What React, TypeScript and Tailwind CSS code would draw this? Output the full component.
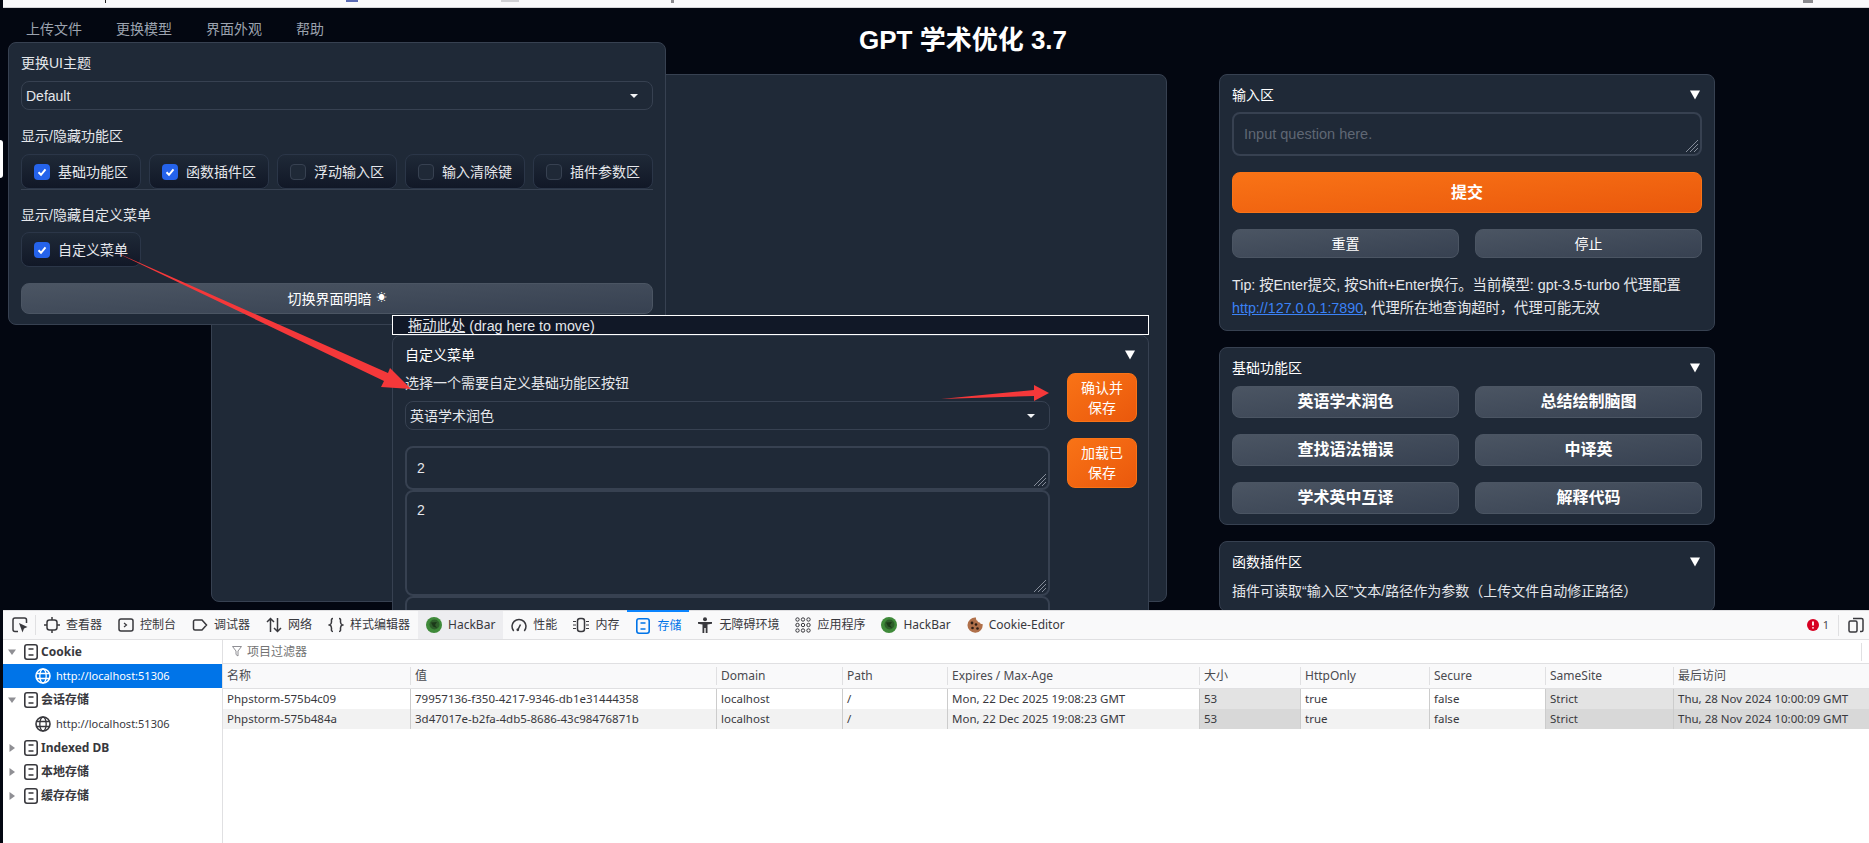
import type { ReactNode } from "react";

/* ----------------------------------
   SMALL DRAWINGS
---------------------------------- */

function PanelArrow() {
  return (
    <svg width="10" height="10" viewBox="0 0 10 10" className="shrink-0">
      <polygon points="0,0.5 10,0.5 5,9.5" fill="#fff" />
    </svg>
  );
}

function Caret() {
  return (
    <svg width="8" height="4" viewBox="0 0 8 4" className="shrink-0">
      <polygon points="0,0 8,0 4,4" fill="#f3f4f6" />
    </svg>
  );
}

function Tick() {
  return (
    <svg width="16" height="16" viewBox="0 0 16 16" className="shrink-0 rounded-[4px] bg-[#2563eb]">
      <path d="M4.5 8.3 7 10.8 11.5 5.4" fill="none" stroke="#fff" strokeWidth="2" />
    </svg>
  );
}

function Hatch() {
  return (
    <svg width="14" height="14" viewBox="0 0 14 14" className="pointer-events-none absolute right-[1px] bottom-[1px]">
      <path d="M1 13 13 1M5 13l8-8M9 13l4-4" stroke="#858c99" strokeWidth="1" />
    </svg>
  );
}

function StorageIcon({ size = 16 }: { size?: number }) {
  return (
    <svg width={size} height={size} viewBox="0 0 16 16" fill="none" stroke="currentColor" strokeWidth="1.6" className="shrink-0">
      <rect x="1.8" y="0.8" width="12.4" height="14.4" rx="2.2" />
      <path d="M5.500 5h5M5.500 11h5" />
    </svg>
  );
}

function GlobeIcon({ light }: { light?: boolean }) {
  return (
    <svg width="16" height="16" viewBox="0 0 16 16" fill="none" stroke={light ? "#fff" : "#38383d"} strokeWidth="1.3" className="shrink-0">
      <circle cx="8" cy="8" r="7" strokeWidth="1.6" />
      <ellipse cx="8" cy="8" rx="3.2" ry="7" />
      <path d="M1.500 5.500h13M1.500 10.500h13" />
    </svg>
  );
}

function TreeArrow({ open }: { open?: boolean }) {
  return (
    <svg width="8" height="8" viewBox="0 0 8 8" className="shrink-0">
      <polygon points={open ? "0,1.500 8,1.500 4,7" : "1.500,0 7,4 1.500,8"} fill="#8f8f94" />
    </svg>
  );
}

function HackBarIcon() {
  return (
    <svg width="16" height="16" viewBox="0 0 16 16" className="shrink-0">
      <circle cx="8" cy="8" r="8" fill="#3f8a3a" />
      <circle cx="8.500" cy="7.500" r="5" fill="#2e5f2b" />
      <path d="M5 5.500 11 5 9 8l2 3-4-1.500z" fill="#1c3a1a" />
    </svg>
  );
}

function CookieIcon() {
  return (
    <svg width="16" height="16" viewBox="0 0 16 16" className="shrink-0">
      <path d="M9 .6A7.600 7.600 0 1 0 15.600 7c-1.300.3-2.400-.4-2.700-1.600-1.300.2-2.400-.5-2.600-1.800C9.400 3.300 8.800 2 9 .6z" fill="#b0704a" />
      <circle cx="5" cy="6" r="1.400" fill="#2d1d14" />
      <circle cx="9" cy="7.500" r="1.300" fill="#2d1d14" />
      <circle cx="5.500" cy="11" r="1.300" fill="#2d1d14" />
      <circle cx="10.500" cy="11.500" r="1.300" fill="#2d1d14" />
    </svg>
  );
}

const stroke = { fill: "none", stroke: "currentColor", strokeWidth: 1.5 };

const ICON_PATHS: Record<string, ReactNode> = {
  inspector: (
    <svg width="16" height="16" viewBox="0 0 16 16" {...stroke} className="shrink-0">
      <path d="M6 14.500H3a2 2 0 0 1-2-2V3a2 2 0 0 1 2-2h9.500a2 2 0 0 1 2 2v3" />
      <polygon points="7,6 15.500,10 12,11.500 10.500,15.500" fill="currentColor" stroke="none" />
    </svg>
  ),
  console: (
    <svg width="16" height="16" viewBox="0 0 16 16" {...stroke} className="shrink-0">
      <rect x="1" y="2" width="14" height="12" rx="2" />
      <path d="m6 6 2.500 2L6 10" strokeWidth="1.200" />
    </svg>
  ),
  viewer: (
    <svg width="16" height="16" viewBox="0 0 16 16" {...stroke} className="shrink-0">
      <rect x="3" y="3" width="10" height="10" rx="2.500" />
      <path d="M8 0v3M8 13v3M0 8h3M13 8h3" />
    </svg>
  ),
  debugger: (
    <svg width="16" height="16" viewBox="0 0 16 16" {...stroke} className="shrink-0">
      <path d="M3 3h7l4.500 5-4.500 5H3a1.500 1.500 0 0 1-1.500-1.500v-7A1.500 1.500 0 0 1 3 3z" />
    </svg>
  ),
  network: (
    <svg width="16" height="16" viewBox="0 0 16 16" {...stroke} className="shrink-0">
      <path d="M4.500 15V1.500M1 5l3.500-3.500L8 5M11.500 1v13.500M8 11l3.500 3.500L15 11" />
    </svg>
  ),
  style: (
    <svg width="16" height="16" viewBox="0 0 16 16" {...stroke} className="shrink-0">
      <path d="M5 1.500C3 1.500 3.500 3 3.500 5S3 7.500 1.500 8C3 8.500 3.500 9 3.500 11s-.5 3.500 1.500 3.500M11 1.500c2 0 1.500 1.500 1.500 3.500s.5 2.500 2 3c-1.500.5-2 1-2 3s.5 3.500-1.500 3.500" />
    </svg>
  ),
  performance: (
    <svg width="16" height="16" viewBox="0 0 16 16" {...stroke} className="shrink-0">
      <path d="M2.700 14A7 7 0 1 1 13.300 14" />
      <path d="m7 12.500 2.500-5" />
      <circle cx="6.800" cy="12.800" r="1.400" fill="currentColor" stroke="none" />
    </svg>
  ),
  memory: (
    <svg width="16" height="16" viewBox="0 0 16 16" {...stroke} className="shrink-0">
      <rect x="4.500" y="1.500" width="7" height="13" rx="2.500" />
      <path d="M0 4.500h3M0 8h3M0 11.500h3M13 4.500h3M13 8h3M13 11.500h3" strokeWidth="1" />
    </svg>
  ),
  accessibility: (
    <svg width="16" height="16" viewBox="0 0 16 16" className="shrink-0" fill="currentColor">
      <circle cx="8" cy="2.200" r="2" />
      <path d="M1 5h14v1.800l-4.500.7V16H8.700v-5H7.300v5H5.500V7.500L1 6.800z" />
    </svg>
  ),
  apps: (
    <svg width="16" height="16" viewBox="0 0 16 16" fill="none" stroke="currentColor" strokeWidth="1" className="shrink-0">
      {[2.500, 8, 13.500].flatMap((x) =>
        [2.500, 8, 13.500].map((y) => <circle key={`${x}-${y}`} cx={x} cy={y} r="1.700" />)
      )}
    </svg>
  ),
  responsive: (
    <svg width="16" height="16" viewBox="0 0 16 16" {...stroke} className="shrink-0">
      <rect x="1" y="4" width="8" height="11" rx="1.500" />
      <path d="M5 1.500h8.500a1.500 1.500 0 0 1 1.500 1.500v10a1.500 1.500 0 0 1-1.500 1.500H12" />
    </svg>
  ),
};

/* ----------------------------------
   GRADIO PARTS
---------------------------------- */

const cjk = "[font-family:'Liberation_Sans','Noto_Sans_CJK_SC',sans-serif]";

function Chip({ label, checked }: { label: string; checked?: boolean }) {
  return (
    <div className="flex h-[35px] w-[120px] items-center gap-[8px] rounded-lg border border-[#2b3648] bg-linear-to-b from-[#1f2937] to-[#111827] pl-[12px] text-sm text-[#e5e7eb]">
      {checked ? <Tick /> : <span className="h-[16px] w-[16px] shrink-0 rounded-[4px] border border-[#374151] bg-[#1f2937]" />}
      {label}
    </div>
  );
}

function Select({ value, className }: { value: string; className: string }) {
  return (
    <div className={`flex h-[29px] items-center justify-between rounded-lg border border-[#374151] bg-[#1f2937] pr-[14px] pl-[4px] text-sm text-[#e5e7eb] ${className}`}>
      {value}
      <Caret />
    </div>
  );
}

function GrayButton({ label, bold, className = "" }: { label: ReactNode; bold?: boolean; className?: string }) {
  return (
    <div className={`flex items-center justify-center rounded-lg border border-[#4b5563] bg-linear-to-br from-[#4b5563] to-[#374151] text-white ${bold ? "h-[32px] text-base font-bold" : "h-[29px] text-sm"} ${className}`}>
      {label}
    </div>
  );
}

function OrangeButton({ children, className }: { children: ReactNode; className: string }) {
  return (
    <div className={`flex items-center justify-center rounded-lg border border-[#f97316] bg-linear-to-br from-[#f97316] to-[#ea580c] text-center text-white ${className}`}>
      {children}
    </div>
  );
}

function Box({ value, placeholder, className, roomy }: { value?: string; placeholder?: string; className: string; roomy?: boolean }) {
  return (
    <div className={`relative shrink-0 rounded-lg border-2 border-[#374151] bg-[#1f2937] ${className}`}>
      <textarea
        readOnly
        value={value ?? ""}
        placeholder={placeholder}
        className={`h-full w-full resize-none bg-transparent px-[10px] text-sm text-[#e5e7eb] outline-none placeholder:text-[14.5px] placeholder:text-[#5f6774] ${roomy ? "pt-[8px]" : "pt-[10px]"} ${cjk}`}
      />
      <Hatch />
    </div>
  );
}

function SideBlock({ title, children }: { title: string; children: ReactNode }) {
  return (
    <section className="rounded-lg border border-[#374151] bg-[#1f2937] px-[12px] pt-[10px] pb-[10px]">
      <div className="flex h-[20px] items-center justify-between pr-[2px] text-sm text-white">
        {title}
        <PanelArrow />
      </div>
      {children}
    </section>
  );
}

/* ----------------------------------
   APPEARANCE POPOVER
---------------------------------- */

function ThemeMenu() {
  return (
    <div className="absolute top-[34px] left-[5px] z-10 h-[283px] w-[658px] rounded-lg border border-[#374151] bg-[#1f2937] px-[12px] pt-[10px] text-sm text-[#e5e7eb]">
      <div className="h-[20px] leading-[20px]">更换UI主题</div>
      <Select value="Default" className="mt-[8px] pl-[4px]" />
      <div className="mt-[16px] h-[20px] leading-[20px]">显示/隐藏功能区</div>
      <div className="mt-[8px] flex justify-between border-b border-[#374151]">
        <Chip label="基础功能区" checked />
        <Chip label="函数插件区" checked />
        <Chip label="浮动输入区" />
        <Chip label="输入清除键" />
        <Chip label="插件参数区" />
      </div>
      <div className="mt-[15px] h-[20px] leading-[20px]">显示/隐藏自定义菜单</div>
      <div className="mt-[7px]">
        <Chip label="自定义菜单" checked />
      </div>
      <GrayButton
        label={
          <>
            切换界面明暗<span className="ml-[5px] text-[10px]">☀</span>
          </>
        }
        className="mt-[16px] !h-[31px]"
      />
    </div>
  );
}

/* ----------------------------------
   FLOATING MENU
---------------------------------- */

function FloatingMenu() {
  return (
    <div className="absolute top-[307px] left-[389px] z-20 w-[757px]">
      <div className="h-[20px] border border-white bg-[#111827] pl-[15px] text-[14.3px] leading-[20px] text-[#e5e7eb]">
        <span className="underline">拖动此处</span> (drag here to move)
      </div>
      <div className="h-[320px] rounded-t-lg border border-[#374151] bg-[#1f2937] pr-[11px] pl-[12px] text-sm text-[#e5e7eb]">
        <div className="flex h-[37px] items-center justify-between pr-[2px] text-white">
          自定义菜单
          <PanelArrow />
        </div>
        <div className="flex gap-[17px]">
          <div className="flex w-[645px] flex-col">
            <div className="h-[20px] leading-[20px]">选择一个需要自定义基础功能区按钮</div>
            <Select value="英语学术润色" className="mt-[8px]" />
            <Box value="2" className="mt-[16px] h-[44px]" />
            <Box value="2" className="h-[106px]" roomy />
            <Box className="h-[100px]" />
          </div>
          <div className="flex w-[70px] flex-col gap-[16px]">
            <OrangeButton className="h-[49px] text-[14px] leading-[20px]">确认并<br />保存</OrangeButton>
            <OrangeButton className="h-[50px] text-[14px] leading-[20px]">加载已<br />保存</OrangeButton>
          </div>
        </div>
      </div>
    </div>
  );
}

/* ----------------------------------
   DEVTOOLS
---------------------------------- */

type Tool = { label: string; icon: ReactNode; active?: boolean; hover?: boolean };

const TOOLS: Tool[] = [
  { label: "查看器", icon: ICON_PATHS.viewer },
  { label: "控制台", icon: ICON_PATHS.console },
  { label: "调试器", icon: ICON_PATHS.debugger },
  { label: "网络", icon: ICON_PATHS.network },
  { label: "样式编辑器", icon: ICON_PATHS.style },
  { label: "HackBar", icon: <HackBarIcon />, hover: true },
  { label: "性能", icon: ICON_PATHS.performance },
  { label: "内存", icon: ICON_PATHS.memory },
  { label: "存储", icon: <StorageIcon />, active: true },
  { label: "无障碍环境", icon: ICON_PATHS.accessibility },
  { label: "应用程序", icon: ICON_PATHS.apps },
  { label: "HackBar", icon: <HackBarIcon /> },
  { label: "Cookie-Editor", icon: <CookieIcon /> },
];

const TREE = [
  { label: "Cookie", arrow: "open" },
  { label: "http://localhost:51306", selected: true },
  { label: "会话存储", arrow: "open" },
  { label: "http://localhost:51306" },
  { label: "Indexed DB", arrow: "closed" },
  { label: "本地存储", arrow: "closed" },
  { label: "缓存存储", arrow: "closed" },
];

const COLUMNS = ["名称", "值", "Domain", "Path", "Expires / Max-Age", "大小", "HttpOnly", "Secure", "SameSite", "最后访问"];

const ROWS = [
  ["Phpstorm-575b4c09", "79957136-f350-4217-9346-db1e31444358", "localhost", "/", "Mon, 22 Dec 2025 19:08:23 GMT", "53", "true", "false", "Strict", "Thu, 28 Nov 2024 10:00:09 GMT"],
  ["Phpstorm-575b484a", "3d47017e-b2fa-4db5-8686-43c98476871b", "localhost", "/", "Mon, 22 Dec 2025 19:08:23 GMT", "53", "true", "false", "Strict", "Thu, 28 Nov 2024 10:00:09 GMT"],
];

const SHADED = [5, 8, 9];
const gridCols = "grid-cols-[187px_306px_126px_105px_252px_101px_129px_116px_128px_1fr]";

function DevTools() {
  return (
    <div className="flex h-[233px] flex-col bg-white text-[12px] text-[#38383d] [font-family:'Noto_Sans','Noto_Sans_CJK_SC',sans-serif]">
      {/* TOOLBAR */}
      <div className="flex h-[30px] shrink-0 items-stretch border-t border-b border-[#e0e0e2] bg-[#f9f9fa]">
        <div className="flex w-[32px] items-center pl-[9px] text-[#38383d]">{ICON_PATHS.inspector}</div>
        <div className="my-[4px] w-px bg-[#e0e0e2]" />
        {TOOLS.map((t, i) => (
          <div
            key={i}
            className={`flex items-center gap-[6px] px-[8px] ${t.hover ? "bg-[#ededf0]" : ""} ${t.active ? "-mt-px border-t-2 border-[#0a84ff] text-[#0074e8]" : ""}`}
          >
            {t.icon}
            <span className="leading-none whitespace-nowrap">{t.label}</span>
          </div>
        ))}
        <div className="ml-auto flex items-center">
          <svg width="12" height="12" viewBox="0 0 12 12" className="shrink-0">
            <circle cx="6" cy="6" r="6" fill="#d70022" />
            <path d="M6 2.500v4M6 8.200v1.300" stroke="#fff" strokeWidth="1.800" />
          </svg>
          <span className="ml-[4px] text-[11px] text-[#4a4a4f]">1</span>
          <div className="mx-[9px] my-[4px] h-[21px] w-px bg-[#e0e0e2]" />
          <div className="pr-[5px]">{ICON_PATHS.responsive}</div>
        </div>
      </div>

      <div className="flex min-h-0 flex-1">
        {/* TREE */}
        <div className="w-[220px] shrink-0 border-r border-[#e0e0e2]">
          {TREE.map((n, i) => (
            <div key={i} className={`flex h-[24px] items-center ${n.selected ? "bg-[#0074e8] text-white" : ""}`}>
              {n.arrow ? (
                <>
                  <span className="ml-[5px] w-[15px]">
                    <TreeArrow open={n.arrow === "open"} />
                  </span>
                  <StorageIcon />
                  <span className="ml-[2px] font-bold text-[#38383d]">{n.label}</span>
                </>
              ) : (
                <>
                  <span className="ml-[32px]">
                    <GlobeIcon light={n.selected} />
                  </span>
                  <span className="ml-[5px] text-[11px]">{n.label}</span>
                </>
              )}
            </div>
          ))}
        </div>

        {/* TABLE */}
        <div className="min-w-0 flex-1">
          <div className="flex h-[24px] items-center border-b border-[#e0e0e2] pl-[9px] text-[#737373]">
            <svg width="10" height="11" viewBox="0 0 10 11" className="mr-[5px] shrink-0">
              <path d="M.5.500h9L6 5v5L4 8.500V5z" fill="none" stroke="#8f8f94" />
            </svg>
            项目过滤器
            <div className="mr-[7px] ml-auto h-[18px] w-px bg-[#e0e0e2]" />
          </div>
          <div className={`grid h-[25px] ${gridCols} border-b border-[#e0e0e2] bg-[#f9f9fa] text-[#4a4a4f]`}>
            {COLUMNS.map((c, i) => (
              <div key={c} className={`my-[3px] pl-[4px] leading-[18px] ${i ? "border-l border-[#e0e0e2]" : ""}`}>
                {c}
              </div>
            ))}
          </div>
          {ROWS.map((row, r) => (
            <div key={r} className={`grid h-[20px] ${gridCols} ${r ? "bg-[#f2f2f2]" : "bg-white"}`}>
              {row.map((c, i) => (
                <div
                  key={i}
                  className={`pl-[4px] text-[11.5px] leading-[20px] whitespace-nowrap ${i ? "border-l border-[#cccccc]" : ""} ${
                    SHADED.includes(i) ? (r ? "bg-[#d8d8d8]" : "bg-[#e3e3e3]") : ""
                  }`}
                >
                  {c}
                </div>
              ))}
            </div>
          ))}
        </div>
      </div>
    </div>
  );
}

/* ----------------------------------
   PAGE
---------------------------------- */

export default function App() {
  return (
    <div className={`relative flex h-[843px] w-full overflow-hidden bg-[#030711] ${cjk}`}>
      {/* LEFT STRIP */}
      <div className="flex w-[3px] shrink-0 flex-col pt-[140px]">
        <div className="h-[38px] rounded-r-sm bg-white" />
      </div>

      <div className="flex min-w-0 flex-1 flex-col">
        {/* cut-off browser chrome */}
        <div className="flex h-[8px] shrink-0 items-start border-b border-[#d4d4d8] bg-[#f9f9fb]">
          <span className="ml-[102px] h-[3px] w-px bg-[#222]" />
          <span className="ml-[240px] h-[2px] w-[12px] bg-[#5b6bb5]" />
          <span className="ml-[143px] h-[2px] w-[18px] bg-[#d0d0d4]" />
          <span className="ml-[152px] h-[3px] w-[3px] bg-[#8a8a8e]" />
          <span className="ml-[1129px] h-[3px] w-[10px] bg-[#8a8a8e]" />
        </div>

        <main className="relative h-[602px] shrink-0 overflow-hidden bg-[#030711]">
          <header className="flex h-[66px] pl-[23px]">
            <nav className="flex h-[42px] w-[833px] items-center gap-[34px] text-sm text-[#9ca3af]">
              <span>上传文件</span>
              <span>更换模型</span>
              <span>界面外观</span>
              <span>帮助</span>
            </nav>
            <h1 className="pt-[14px] text-[26px] leading-[36px] font-bold text-white">GPT 学术优化 3.7</h1>
          </header>

          <div className="flex gap-[52px] pl-[208px]">
            <div className="h-[528px] w-[956px] rounded-lg border border-[#374151] bg-[#1f2937]" />

            <div className="flex w-[496px] flex-col gap-[16px]">
              <SideBlock title="输入区">
                <Box placeholder="Input question here." className="mt-[7px] h-[44px]" />
                <OrangeButton className="mt-[16px] h-[41px] text-base font-bold">提交</OrangeButton>
                <div className="mt-[16px] grid grid-cols-2 gap-[16px]">
                  <GrayButton label="重置" />
                  <GrayButton label="停止" />
                </div>
                <p className="mt-[16px] text-[14.3px] leading-[23px] text-[#e5e7eb]">
                  Tip: 按Enter提交, 按Shift+Enter换行。当前模型: gpt-3.5-turbo 代理配置
                  <br />
                  <span className="text-[#3b82f6] underline">http://127.0.0.1:7890</span>, 代理所在地查询超时，代理可能无效
                </p>
              </SideBlock>

              <SideBlock title="基础功能区">
                <div className="mt-[8px] grid grid-cols-2 gap-[16px]">
                  {["英语学术润色", "总结绘制脑图", "查找语法错误", "中译英", "学术英中互译", "解释代码"].map((l) => (
                    <GrayButton key={l} label={l} bold />
                  ))}
                </div>
              </SideBlock>

              <SideBlock title="函数插件区">
                <p className="mt-[9px] text-sm leading-[20px] text-[#e5e7eb]">
                  插件可读取“输入区”文本/路径作为参数（上传文件自动修正路径）
                </p>
              </SideBlock>
            </div>
          </div>

          <ThemeMenu />
          <FloatingMenu />
        </main>

        <DevTools />
      </div>

      {/* ARROWS */}
      <svg width="1869" height="843" viewBox="0 0 1869 843" className="pointer-events-none absolute top-0 left-0 z-30">
        <polygon points="113,251 388,373 390,368 411,389 381,387 384,381" fill="#f5383a" />
        <polygon points="941,399 1034,390 1034,385 1049,393 1034,401 1034,396" fill="#f5383a" />
      </svg>
    </div>
  );
}
